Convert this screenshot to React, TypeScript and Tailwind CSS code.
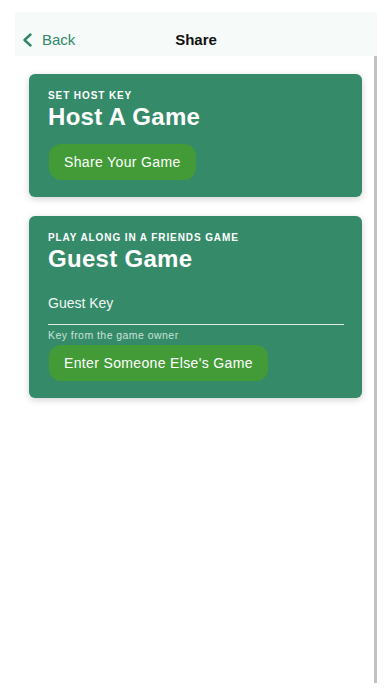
import { useState } from "react";

const font = { fontFamily: '"Liberation Sans", Arial, sans-serif' };

const GameButton = ({ label }: { label: string }) => (
  <button
    type="button"
    className="h-[36px] px-[15px] rounded-[12px] bg-[#429b37] text-white text-[14px] tracking-[0.35px] leading-[18px] self-start ml-px"
  >
    {label}
  </button>
);

const Eyebrow = ({ children }: { children: string }) => (
  <p className="text-[10px] leading-[12px] font-bold tracking-[0.9px] text-white uppercase">{children}</p>
);

const Title = ({ children }: { children: string }) => (
  <h2 className="mt-px text-[24px] leading-[28px] font-bold tracking-[0.3px] text-white">{children}</h2>
);

export default function App() {
  const [guestKey, setGuestKey] = useState("");

  return (
    <div className="min-h-[696px] bg-white px-[15px] pt-[12px]" style={font}>
      {/* Nav bar */}
      <header className="h-[44px] bg-[#f6fbf9] grid grid-cols-[1fr_auto_1fr] items-start pt-[19px]">
        <button type="button" className="flex items-center gap-[10px] pl-[7px] text-[#2f8868]">
          <svg width="10" height="14" viewBox="0 0 10 14" fill="none">
            <path d="M8.5 1.5 L2.5 7 L8.5 12.5" stroke="currentColor" strokeWidth="2.4" strokeLinecap="round" strokeLinejoin="round" />
          </svg>
          <span className="text-[15px] leading-[18px]">Back</span>
        </button>
        <h1 className="text-[15px] leading-[18px] font-bold text-[#111111]">Share</h1>
        <div />
      </header>

      <div className="flex">
        <main className="flex-1 pl-[14px] pr-[12px] pt-[18px] flex flex-col gap-[19px]">
          {/* Host card */}
          <section className="rounded-[6px] bg-[#358a69] shadow-[0_2px_7px_rgba(0,0,0,0.18)] pl-[19px] pr-[18px] pt-[16px] pb-[17px] flex flex-col">
            <Eyebrow>Set Host Key</Eyebrow>
            <Title>Host A Game</Title>
            <div className="mt-[13px] flex flex-col">
              <GameButton label="Share Your Game" />
            </div>
          </section>

          {/* Guest card */}
          <section className="rounded-[6px] bg-[#358a69] shadow-[0_2px_7px_rgba(0,0,0,0.18)] pl-[19px] pr-[18px] pt-[16px] pb-[17px] flex flex-col">
            <Eyebrow>Play Along In A Friends Game</Eyebrow>
            <Title>Guest Game</Title>
            <div className="mt-[20px] pb-[11px] border-b border-[#dcece5]">
              <input
                value={guestKey}
                onChange={(e) => setGuestKey(e.target.value)}
                placeholder="Guest Key"
                className="block w-full bg-transparent outline-none text-[14px] leading-[20px] h-[20px] text-white placeholder:text-[#f2f7f4]"
              />
            </div>
            <p className="mt-[4px] text-[10.5px] leading-[13px] tracking-[0.45px] text-[#c9e3d7]">Key from the game owner</p>
            <div className="mt-[3px] flex flex-col">
              <GameButton label="Enter Someone Else's Game" />
            </div>
          </section>
        </main>

        {/* Scroll indicator */}
        <div className="w-[3px] h-[627px] bg-[#c2c2c2]" />
      </div>
    </div>
  );
}
